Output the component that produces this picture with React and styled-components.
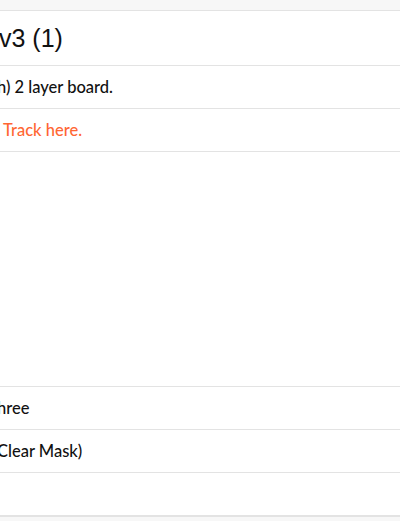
import React from 'react';
import styled, { createGlobalStyle } from 'styled-components';

const GlobalStyle = createGlobalStyle`
  html, body {
    margin: 0;
    padding: 0;
    background: #f7f7f7;
  }
  * {
    box-sizing: border-box;
  }
`;

const Page = styled.div`
  width: 400px;
  height: 521px;
  overflow: hidden;
  background: #f7f7f7;
  padding-top: 10px;
`;

const Sheet = styled.div`
  background: #fff;
  border-top: 1px solid #e3e3e3;
  border-bottom: 2px solid #e3e3e3;
  display: flex;
  flex-direction: column;
`;

const Row = styled.div`
  height: ${p => p.$h}px;
  display: flex;
  align-items: center;
  border-bottom: 1px solid #e3e3e3;
  overflow: hidden;
  &:last-child {
    border-bottom: none;
  }
`;

const Title = styled.h1`
  margin: 0 0 0 ${p => p.$shift || 0}px;
  font-family: "Liberation Sans", Arial, sans-serif;
  font-weight: 400;
  font-size: 25px;
  color: #111;
  white-space: nowrap;
`;

const Value = styled.span`
  margin-left: ${p => p.$shift || 0}px;
  font-family: Lato, "Open Sans", sans-serif;
  font-size: 16.5px;
  font-weight: 500;
  color: ${p => (p.$accent ? '#ff6633' : '#111')};
  white-space: nowrap;
`;

const Preview = styled.div`
  height: 235px;
  border-bottom: 1px solid #e3e3e3;
`;

export default function App() {
  return (
    <>
      <GlobalStyle />
      <Page>
        <Sheet>
          <Row $h={55}>
            <Title $shift={-1}>v3 (1)</Title>
          </Row>
          <Row $h={43}>
            <Value $shift={-3}>h) 2 layer board.</Value>
          </Row>
          <Row $h={43}>
            <Value $accent $shift={3}>Track here.</Value>
          </Row>
          <Preview />
          <Row $h={43}>
            <Value $shift={-3}>hree</Value>
          </Row>
          <Row $h={43}>
            <Value $shift={-3}>Clear Mask)</Value>
          </Row>
          <Row $h={42} />
        </Sheet>
      </Page>
    </>
  );
}
